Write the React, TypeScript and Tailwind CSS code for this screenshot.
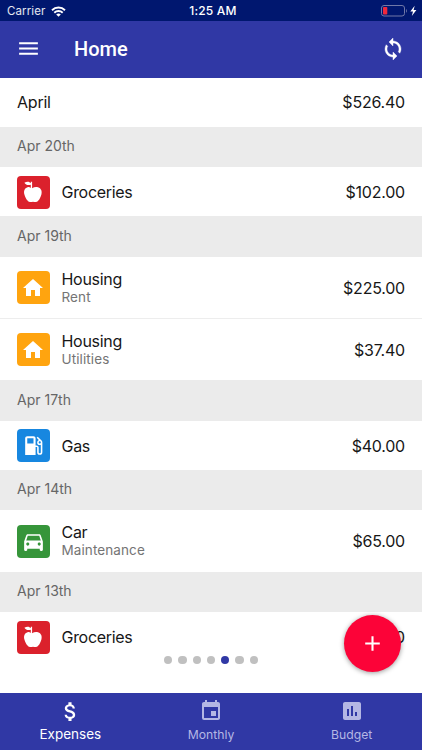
import { ReactNode } from 'react';
import {
  MdAdd,
  MdAssessment,
  MdAttachMoney,
  MdDirectionsCar,
  MdEvent,
  MdHome,
  MdLocalGasStation,
  MdMenu,
} from 'react-icons/md';

const AppleIcon = () => (
  <svg viewBox="0 0 24 24" width="24" height="24" fill="currentColor">
    <path d="M11.1 8.2C12.8 7 15 6.7 17 7.2C20.2 8.2 21.3 11.3 20.4 14.5C19.4 18 17.6 21.6 15 22C13.6 22.2 12.9 21.8 12 21.8C11 21.8 10.3 22.2 9 22C6.4 21.6 4.4 18 3.4 14.5C2.5 11 3.5 8.2 6.6 7.2C7.7 6.8 8.9 7.3 9.8 8V4.7C7 5.6 4.8 4.8 3.4 2.7C6 1.2 8.6 1.5 9.8 3.3V1.7H11.1Z" />
  </svg>
);

const SyncIcon = () => (
  <svg viewBox="0 0 24 24" width="24" height="24" fill="currentColor" stroke="currentColor" strokeWidth="0.4">
    <path d="M12 4V1L8 5l4 4V6c3.31 0 6 2.69 6 6 0 1.01-.25 1.97-.7 2.8l1.46 1.46C19.54 15.03 20 13.57 20 12c0-4.42-3.58-8-8-8zm0 14c-3.31 0-6-2.69-6-6 0-1.01.25-1.97.7-2.8L5.24 7.74C4.46 8.97 4 10.43 4 12c0 4.42 3.58 8 8 8v3l4-4-4-4v3z" />
  </svg>
);

type Expense = {
  category: string;
  note?: string;
  amount: string;
};

const categories: Record<string, { color: string; icon: ReactNode }> = {
  Groceries: { color: 'bg-[#db212c]', icon: <AppleIcon /> },
  Housing: { color: 'bg-[#ffa40f]', icon: <MdHome size={24} /> },
  Gas: { color: 'bg-[#1787e0]', icon: <MdLocalGasStation size={25} /> },
  Car: { color: 'bg-[#36953a]', icon: <MdDirectionsCar size={25} /> },
};

const days: { date: string; expenses: Expense[] }[] = [
  { date: 'Apr 20th', expenses: [{ category: 'Groceries', amount: '$102.00' }] },
  {
    date: 'Apr 19th',
    expenses: [
      { category: 'Housing', note: 'Rent', amount: '$225.00' },
      { category: 'Housing', note: 'Utilities', amount: '$37.40' },
    ],
  },
  { date: 'Apr 17th', expenses: [{ category: 'Gas', amount: '$40.00' }] },
  { date: 'Apr 14th', expenses: [{ category: 'Car', note: 'Maintenance', amount: '$65.00' }] },
  { date: 'Apr 13th', expenses: [{ category: 'Groceries', amount: '$80.00' }] },
];

const StatusBar = () => (
  <div className="grid h-[21px] shrink-0 grid-cols-3 items-center bg-[#00176f] pt-px pr-[5px] pl-[7px] text-[11.5px] text-white">
    <div className="flex items-center gap-[6px]">
      <span className="pt-px tracking-[0.1px] text-white/90">Carrier</span>
      <svg width="15" height="11" viewBox="0 0 15 11" fill="none" stroke="white" strokeWidth="1.9">
        <path d="M1 4.2a9.3 9.3 0 0 1 13 0" />
        <path d="M3.3 6.7a6 6 0 0 1 8.4 0" />
        <path d="M7.5 10.8 5.2 8.5a3.3 3.3 0 0 1 4.6 0z" fill="white" stroke="none" />
      </svg>
    </div>
    <span className="pl-[2px] text-center text-[12px] font-medium tracking-[0.2px]">1:25 AM</span>
    <div className="flex items-center justify-end">
      <svg width="36" height="12" viewBox="0 0 36 12">
        <rect x="0.5" y="0.5" width="23" height="10.5" rx="2.5" fill="none" stroke="#7078a8" />
        <rect x="2" y="2" width="4.3" height="7.5" rx="0.8" fill="#f0283c" />
        <path d="M25 4v3.8c1.2-.5 1.2-3.3 0-3.8z" fill="#7078a8" />
        <path d="M33.7 0.7 29.3 6.5h2.7l-1.2 4.6 4.6-6h-2.8z" fill="white" />
      </svg>
    </div>
  </div>
);

const Header = () => (
  <header className="flex h-[56.5px] shrink-0 items-center bg-[#3038a5] pr-[17px] pb-px pl-4 text-white">
    <MdMenu size={25} />
    <h1 className="ml-[33px] flex-1 font-[Roboto,sans-serif] text-[20px] font-medium">Home</h1>
    <SyncIcon />
  </header>
);

const ExpenseRow = ({ category, note, amount }: Expense) => {
  const { color, icon } = categories[category];

  return (
    <div className={`flex items-center pt-[0.8px] pr-[17px] pl-[16.5px] ${note ? 'h-[61.5px]' : 'h-[49px]'}`}>
      <div className={`flex size-[33px] items-center justify-center rounded-[4px] text-white ${color}`}>
        {icon}
      </div>
      <div className="ml-3 flex-1">
        <div className="text-[16px] leading-[18px] tracking-[-0.3px]">{category}</div>
        {note && <div className="text-[13.5px] leading-[18px] tracking-[0.1px] text-[#747474]">{note}</div>}
      </div>
      <div className="text-[16px] tracking-[-0.22px]">{amount}</div>
    </div>
  );
};

const tabs = [
  { label: 'Expenses', icon: <MdAttachMoney size={25} />, style: 'text-white text-[13.5px] leading-[20px]' },
  { label: 'Monthly', icon: <MdEvent size={24} />, style: 'text-[#b4b7e4] text-[12.2px] leading-[24px]' },
  { label: 'Budget', icon: <MdAssessment size={24} />, style: 'text-[#b4b7e4] text-[12.2px] leading-[24px]' },
];

const App = () => {
  return (
    <div className="relative flex h-[750px] w-[422px] flex-col overflow-hidden bg-white font-[Inter,sans-serif] text-[#171717]">
      <StatusBar />
      <Header />

      <main className="min-h-0 flex-1 overflow-hidden">
        <div className="flex h-[49.4px] items-center justify-between px-[17px] text-[16px] tracking-[-0.22px]">
          <span>April</span>
          <span>$526.40</span>
        </div>
        {days.map(({ date, expenses }) => (
          <section key={date}>
            <h2 className="flex h-[40.6px] items-center bg-[#ebebeb] px-[17px] pb-[2.4px] text-[14px] text-[#666]">
              {date}
            </h2>
            <div className="divide-y divide-[#ededed]">
              {expenses.map((expense, i) => (
                <ExpenseRow key={i} {...expense} />
              ))}
            </div>
          </section>
        ))}
      </main>

      {/* Page indicator */}
      <div className="absolute inset-x-0 bottom-[86px] flex justify-center gap-[5.9px]">
        {[0, 1, 2, 3, 4, 5, 6].map((page) => (
          <span
            key={page}
            className={`size-[8.4px] rounded-full ${page === 4 ? 'bg-[#3038a5]' : 'bg-[#c0c0c0]'}`}
          />
        ))}
      </div>

      <button className="absolute right-[21px] bottom-[78px] flex size-[57px] items-center justify-center rounded-full bg-[#fc0338] text-white shadow-[0_1px_5px_rgba(0,0,0,0.4)]">
        <MdAdd size={25} />
      </button>

      <nav className="grid h-[57.4px] shrink-0 grid-cols-3 bg-[#3038a5]">
        {tabs.map(({ label, icon, style }) => (
          <a key={label} className={`flex flex-col items-center pt-[6.5px] ${style}`}>
            {icon}
            <span>{label}</span>
          </a>
        ))}
      </nav>
    </div>
  );
};

export default App;
